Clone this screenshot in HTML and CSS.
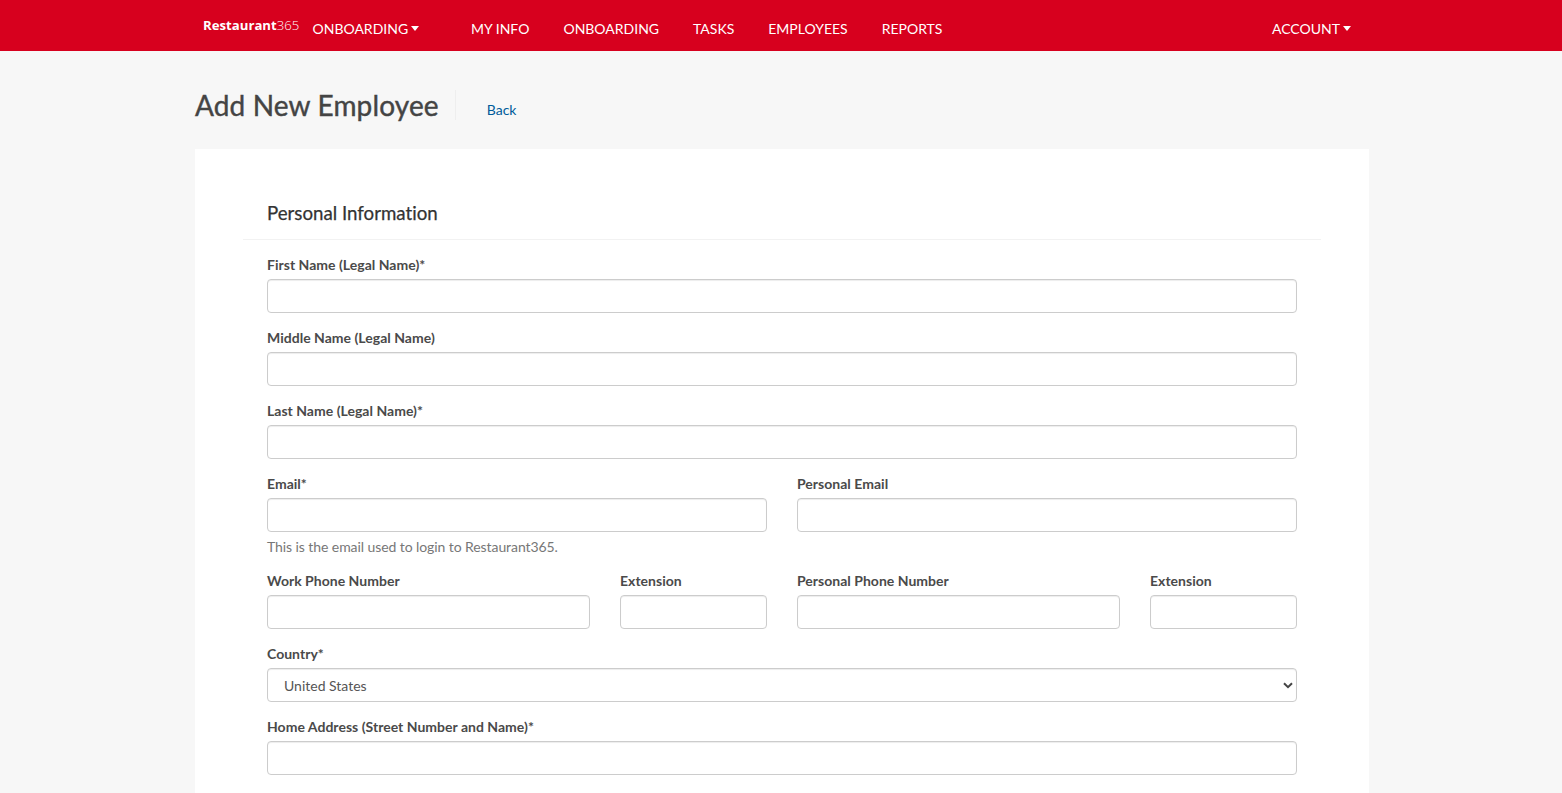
FILE: index.html
```html
<!DOCTYPE html>
<html lang="en">
<head>
<meta charset="utf-8">
<title>Add New Employee</title>
<link rel="stylesheet" href="styles.css">
</head>
<body>
<nav class="topbar">
  <div class="brand"><span class="brand-bold">Restaurant</span><span class="brand-light">365</span></div>
  <a class="nav-link nav-context">ONBOARDING<span class="caret"></span></a>
  <div class="nav-main">
    <a class="nav-link">MY INFO</a>
    <a class="nav-link">ONBOARDING</a>
    <a class="nav-link">TASKS</a>
    <a class="nav-link">EMPLOYEES</a>
    <a class="nav-link">REPORTS</a>
  </div>
  <a class="nav-link nav-account">ACCOUNT<span class="caret"></span></a>
</nav>
<main class="page">
  <header class="page-head">
    <h1>Add New Employee</h1>
    <a class="back">Back</a>
  </header>
  <section class="card">
    <h2>Personal Information</h2>
    <form class="form">
      <div class="field"><label>First Name (Legal Name)*</label><input type="text"></div>
      <div class="field"><label>Middle Name (Legal Name)</label><input type="text"></div>
      <div class="field"><label>Last Name (Legal Name)*</label><input type="text"></div>
      <div class="row-half">
        <div class="field"><label>Email*</label><input type="text"><p class="hint">This is the email used to login to Restaurant365.</p></div>
        <div class="field"><label>Personal Email</label><input type="text"></div>
      </div>
      <div class="row-half">
        <div class="row-phone">
          <div class="field"><label>Work Phone Number</label><input type="text"></div>
          <div class="field"><label>Extension</label><input type="text"></div>
        </div>
        <div class="row-phone">
          <div class="field"><label>Personal Phone Number</label><input type="text"></div>
          <div class="field"><label>Extension</label><input type="text"></div>
        </div>
      </div>
      <div class="field"><label>Country*</label>
        <div class="select"><span>United States</span>
          <svg class="chevron" width="10" height="7" viewBox="0 0 10 7"><path d="M1 1.2 5 5.2 9 1.2" fill="none" stroke="#444" stroke-width="2"/></svg>
        </div>
      </div>
      <div class="field"><label>Home Address (Street Number and Name)*</label><input type="text"></div>
    </form>
  </section>
</main>
</body>
</html>
```
FILE: styles.css
```css
* { box-sizing: border-box; }
html, body { margin: 0; height: 100%; overflow: hidden; }
body { background: #f7f7f7; font-family: Lato, "Liberation Sans", sans-serif; color: #444; font-size: 14px; font-variant-ligatures: none; }

.topbar { height: 51px; background: #d7001e; display: flex; align-items: center; padding: 0 211px 0 203px; color: #fff; }
.brand { font-size: 13.2px; line-height: 16px; margin-top: -2px; width: 109.5px; white-space: nowrap; font-family: "Open Sans", Lato, sans-serif; }
.brand-bold { font-weight: 700; }
.brand-light { font-weight: 300; }
.nav-link { font-size: 14px; line-height: 20px; color: #fff; margin-top: 6px; white-space: nowrap; display: flex; align-items: center; }
.nav-context { width: 158.5px; }
.nav-main { display: flex; gap: 34px; flex: 1; }
.caret { display: inline-block; width: 0; height: 0; margin-left: 3px; border-left: 4.5px solid transparent; border-right: 4.5px solid transparent; border-top: 5px solid #fff; }

.page { width: 1174px; margin-left: 195px; }
.page-head { height: 98px; display: flex; align-items: flex-start; padding-top: 39px; }
h1 { margin: 0; font-size: 28px; line-height: 30px; font-weight: 400; letter-spacing: 0.14px; -webkit-text-stroke: 0.4px #444; color: #444; padding-right: 16px; height: 30px; border-right: 1px solid #eee; }
.back { color: #005b9a; font-size: 14px; line-height: 18px; margin: 11px 0 0 31px; }

.card { background: #fff; height: 800px; padding: 0 48px; }
h2 { margin: 0; padding: 51px 24px 14px; height: 91px; font-size: 18.7px; line-height: 26px; font-weight: 400; -webkit-text-stroke: 0.25px #333; color: #333; border-bottom: 1px solid #f2f2f2; }
.form { padding: 16px 24px 0; display: flex; flex-direction: column; gap: 16px; }
.field { display: flex; flex-direction: column; }
label { font-size: 14px; line-height: 18px; font-weight: 700; letter-spacing: 0.02px; color: #4a4a4a; margin-bottom: 5px; display: block; white-space: nowrap; }
input, .select { height: 34px; width: 100%; border: 1px solid #ccc; border-radius: 4px; background: #fff; box-shadow: inset 0 1px 1px rgba(0,0,0,.075); display: block; }
.select { display: flex; align-items: center; justify-content: space-between; padding: 0 3px 0 16px; font-size: 14px; color: #555; }
.chevron { flex: none; }
.row-half { display: grid; grid-template-columns: 500px 500px; column-gap: 30px; }
.row-phone { display: grid; grid-template-columns: 323px 147px; column-gap: 30px; }
.hint { margin: 6px 0 0; font-size: 14px; line-height: 18px; letter-spacing: -0.08px; color: #777; }
```
